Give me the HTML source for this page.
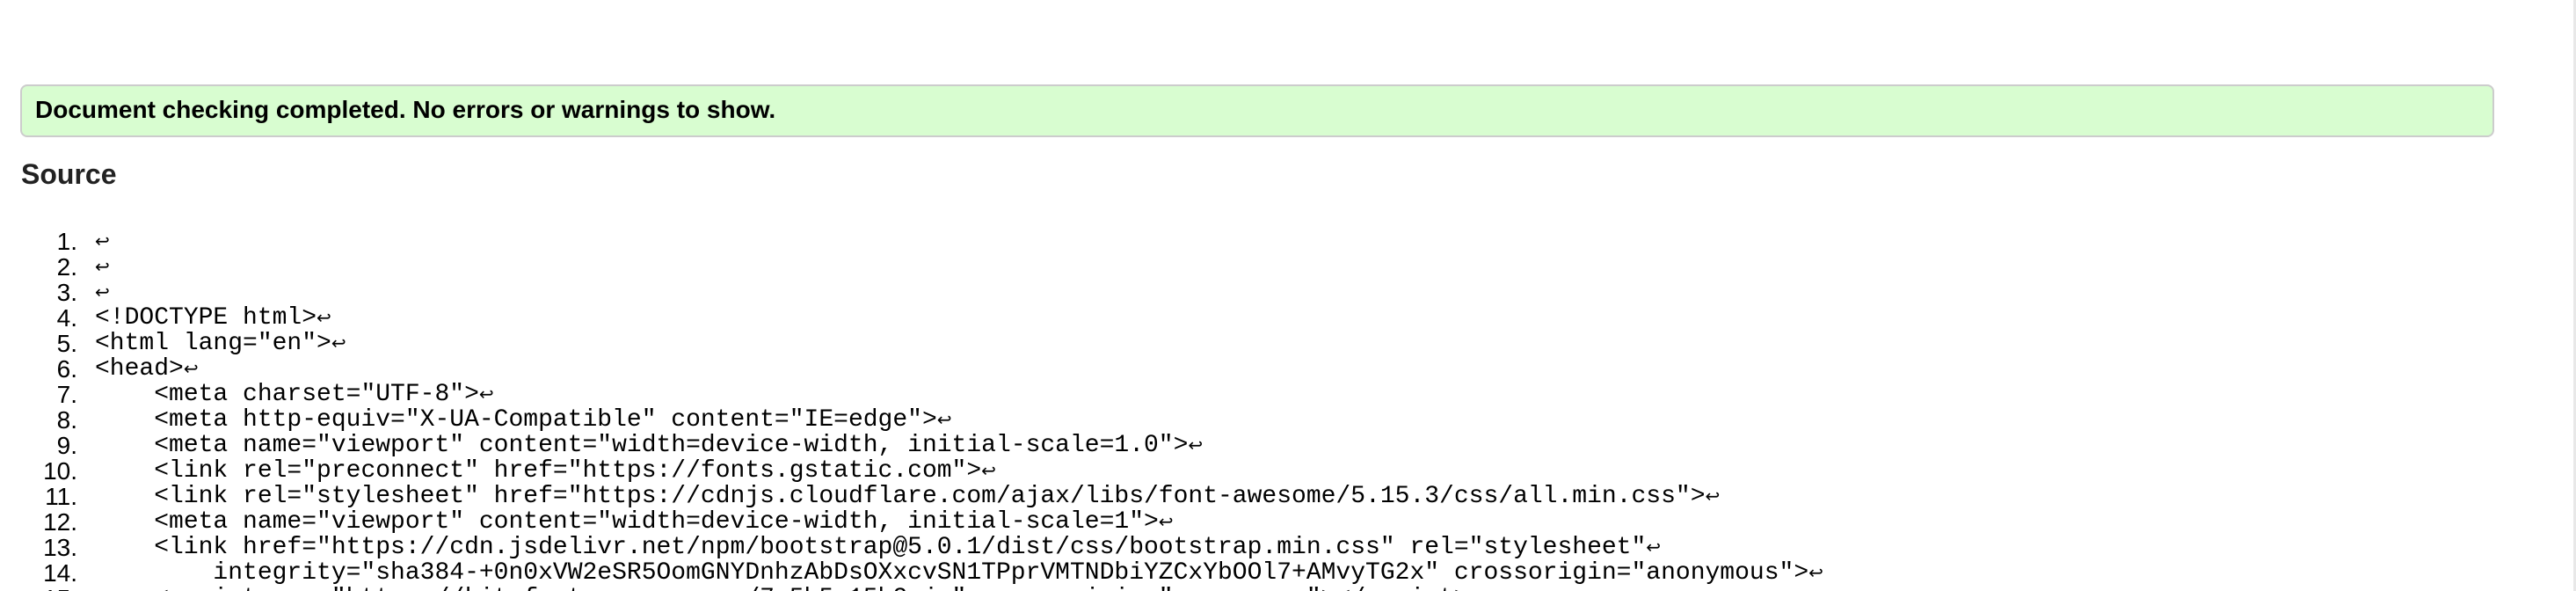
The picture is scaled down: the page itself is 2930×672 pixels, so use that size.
<!DOCTYPE html>
<html><head><style>
html,body{margin:0;padding:0;background:#fff;width:2930px;height:672px;overflow:hidden;position:relative}
.box{position:absolute;left:23px;top:96px;width:2810px;height:56px;background:#d8fdd0;border:2px solid #ccc;border-radius:8px}
.msg{position:absolute;left:40px;top:108px;font:bold 28px/34px "Liberation Sans",sans-serif;color:#000;white-space:nowrap}
h2{position:absolute;left:24px;top:178px;margin:0;font:bold 32px/40px "Liberation Sans",sans-serif;color:#222}
.n{position:absolute;width:88px;text-align:right;left:0;font:28px/29px "Liberation Sans",sans-serif;color:#000;margin-top:2px}
.c{position:absolute;left:108px;font:28px/29px "Liberation Mono",monospace;color:#000;white-space:pre;margin-top:2px}
.c i{font-style:normal;font-size:20px}
.sb{position:absolute;right:0;top:0;width:3px;height:672px;background:#e8e8e8}
</style></head><body>
<div class="box"></div>
<div class="msg">Document checking completed. No errors or warnings to show.</div>
<h2>Source</h2>
<div class="n" style="top:258px">1.</div><div class="c" style="top:258px"><i>↩</i></div>
<div class="n" style="top:287px">2.</div><div class="c" style="top:287px"><i>↩</i></div>
<div class="n" style="top:316px">3.</div><div class="c" style="top:316px"><i>↩</i></div>
<div class="n" style="top:345px">4.</div><div class="c" style="top:345px">&lt;!DOCTYPE html&gt;<i>↩</i></div>
<div class="n" style="top:374px">5.</div><div class="c" style="top:374px">&lt;html lang="en"&gt;<i>↩</i></div>
<div class="n" style="top:403px">6.</div><div class="c" style="top:403px">&lt;head&gt;<i>↩</i></div>
<div class="n" style="top:432px">7.</div><div class="c" style="top:432px">    &lt;meta charset="UTF-8"&gt;<i>↩</i></div>
<div class="n" style="top:461px">8.</div><div class="c" style="top:461px">    &lt;meta http-equiv="X-UA-Compatible" content="IE=edge"&gt;<i>↩</i></div>
<div class="n" style="top:490px">9.</div><div class="c" style="top:490px">    &lt;meta name="viewport" content="width=device-width, initial-scale=1.0"&gt;<i>↩</i></div>
<div class="n" style="top:519px">10.</div><div class="c" style="top:519px">    &lt;link rel="preconnect" href="https://fonts.gstatic.com"&gt;<i>↩</i></div>
<div class="n" style="top:548px">11.</div><div class="c" style="top:548px">    &lt;link rel="stylesheet" href="https://cdnjs.cloudflare.com/ajax/libs/font-awesome/5.15.3/css/all.min.css"&gt;<i>↩</i></div>
<div class="n" style="top:577px">12.</div><div class="c" style="top:577px">    &lt;meta name="viewport" content="width=device-width, initial-scale=1"&gt;<i>↩</i></div>
<div class="n" style="top:606px">13.</div><div class="c" style="top:606px">    &lt;link href="https://cdn.jsdelivr.net/npm/bootstrap@5.0.1/dist/css/bootstrap.min.css" rel="stylesheet"<i>↩</i></div>
<div class="n" style="top:635px">14.</div><div class="c" style="top:635px">        integrity="sha384-+0n0xVW2eSR5OomGNYDnhzAbDsOXxcvSN1TPprVMTNDbiYZCxYbOOl7+AMvyTG2x" crossorigin="anonymous"&gt;<i>↩</i></div>
<div class="n" style="top:664px">15.</div><div class="c" style="top:664px">    &lt;script src="https://kit.fontawesome.com/7e5b5a15b2.js" crossorigin="anonymous"&gt;&lt;/script&gt;<i>↩</i></div>
<div class="sb"></div>
</body></html>
